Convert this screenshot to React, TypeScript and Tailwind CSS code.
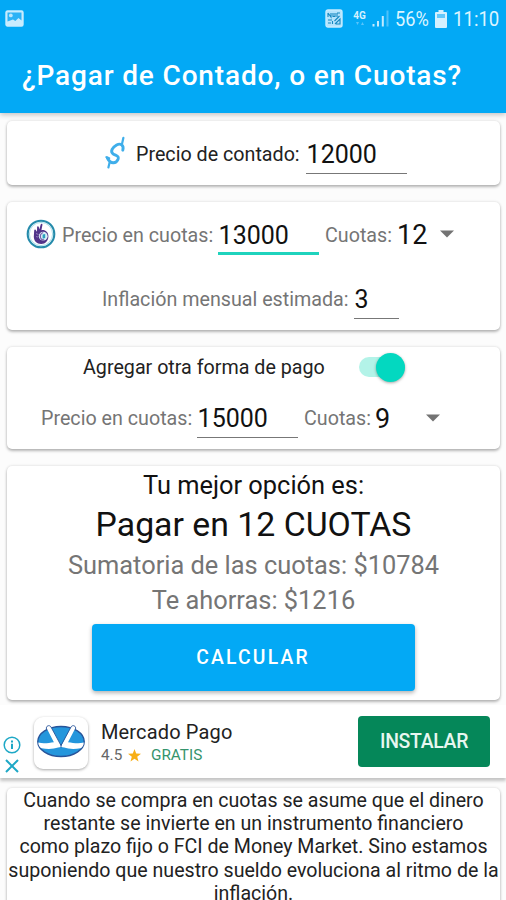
import type { ReactNode } from "react";
import clsx from "clsx";

type CardProps = {
  className?: string;
  children: ReactNode;
};

const Card = ({ className, children }: CardProps) => (
  <section
    className={clsx(
      "mr-[6px] ml-[7px] rounded-[5px] bg-white shadow-[0_2px_3px_rgba(0,0,0,0.26),0_0_3px_rgba(0,0,0,0.14)]",
      className
    )}
  >
    {children}
  </section>
);

type FieldProps = {
  value: string;
  className?: string;
  active?: boolean;
};

const Field = ({ value, className, active }: FieldProps) => (
  <div
    className={clsx(
      "h-[38px] shrink-0 pl-[0.6px] text-[25px] leading-[37px] text-[#111]",
      active ? "border-b-[3px] border-[#1fd3bd]" : "border-b border-[#777]",
      className
    )}
  >
    {value}
  </div>
);

const Caret = () => (
  <svg className="h-[8px] w-[14px] shrink-0" viewBox="0 0 14 8">
    <path d="M0 0.5h14L7 7.5z" fill="#737373" />
  </svg>
);

const PictureIcon = () => (
  <svg className="h-[17px] w-[19px]" viewBox="0 0 19 17">
    <rect x="1" y="1" width="17" height="15" rx="1.5" fill="#c9ecfe" stroke="#c9ecfe" strokeWidth="1.4" />
    <path d="M2.5 2.5h14v8l-3-2.5-3.2 3-2.3-1.5-5.5 2z" fill="#2bb2f6" />
    <circle cx="5.8" cy="5.4" r="1.9" fill="#b9e6fd" />
  </svg>
);

const NfcIcon = () => (
  <svg className="h-[19px] w-[18px]" viewBox="0 0 18 19">
    <rect x="1" y="1" width="16" height="17" rx="2" fill="#b5e4fd" stroke="#c7ebfe" strokeWidth="1.4" />
    <path
      d="M3 4v4M3 4l3 4V4M8 4v3.5h2V4M12 4h3M12 4v4M14.5 7l-5 5M3 11h4M3 14h3M7.5 12v3M10 15l5-5v5h-4"
      fill="none"
      stroke="#1789c2"
      strokeWidth="1.1"
    />
  </svg>
);

const NetworkIcon = () => (
  <div className="flex h-[18px] w-[15px] flex-col items-center text-[#d5f1ff]">
    <span className="text-[10px] leading-[11px] font-bold">4G</span>
    <svg className="h-[5px] w-[10px]" viewBox="0 0 10 5">
      <path d="M1 1h3L2.5 4zM6 4h3L7.5 1z" fill="#58c4fb" />
    </svg>
  </div>
);

const SignalIcon = () => (
  <svg className="h-[17px] w-[17px]" viewBox="0 0 17 17">
    <path d="M0.5 14h2v2.5h-2zM5 11h2v5.5H5zM9.8 6h2v10.5h-2z" fill="#c3eaff" />
    <path d="M14.5 0.5h2v16h-2z" fill="#4fc1fa" />
  </svg>
);

const BatteryIcon = () => (
  <svg className="h-[18px] w-[12px]" viewBox="0 0 12 18">
    <path d="M3.5 0h5v2H11a1 1 0 0 1 1 1v14a1 1 0 0 1-1 1H1a1 1 0 0 1-1-1V3a1 1 0 0 1 1-1h2.5z" fill="#d3f1ff" />
    <path d="M2 4h8v4H2z" fill="#62c8fb" />
  </svg>
);

const DollarIcon = () => (
  <svg className="h-[34px] w-[22px] shrink-0" viewBox="0 0 22 34" fill="none" stroke="#3faeea" strokeLinecap="round">
    <path
      d="M18.8 14.2C20.2 9.2 16.5 6.8 12.6 9C8.4 11.4 6 15.4 9 17.8C11.6 19.8 15.6 19.4 14 23.4C12 27.8 6.5 28.4 3.4 22"
      strokeWidth="2.9"
    />
    <path d="M18 8L19.4 1.8M5.6 26.4L4.4 31.5M2.4 21.2l2.8 1" strokeWidth="2.2" />
  </svg>
);

const HandCoinIcon = () => (
  <svg className="h-[30px] w-[30px] shrink-0" viewBox="0 0 30 30">
    <circle cx="15" cy="15" r="13.3" fill="#fff" stroke="#258bab" strokeWidth="2.1" />
    <circle cx="15" cy="15" r="11.6" fill="none" stroke="#a9deea" />
    <path
      d="M8.2 11.6c0-1.2 1.4-1.4 1.9-.2l.9 1.4.1-4.6c0-1.3 1.5-1.3 1.7-.1l.5 2.5 1.4-5.1c.4-1.3 2-.8 1.7.5l-1 5.2c3.5-.9 6.9 1.8 7 5.8.1 4.6-3 8-7.2 8-4.5 0-7.2-2.9-7.4-7.2z"
      fill="#513489"
    />
    <circle cx="17.2" cy="17.2" r="4.4" fill="#d9eff7" />
    <path d="M17.2 13.5c-2.3.8-3.2 3.2-2.6 5.4.8 1.6 2.2 2.2 3.6 1.8" fill="none" stroke="#7c62ad" strokeWidth="1.2" />
    <path d="M16.6 15.6l2.6-.6v4l-2.6.8z" fill="#2b9fbd" />
    <path d="M10 14.5l2.5 1M10 17.5l2 .6" stroke="#9d8ac5" strokeWidth=".8" />
  </svg>
);

const HandshakeLogo = () => (
  <svg className="-mt-[4px] h-[34px] w-[48px]" viewBox="0 0 48 34">
    <ellipse cx="24" cy="17.5" rx="23.2" ry="15" fill="#2496dc" stroke="#27549a" strokeWidth="1.4" />
    <path
      d="M1.3 18.5c5.3 1.6 10.7.3 15.6-.3L9.8 4.6C9 2 12.5.5 14 3l10.3 18.7L34 3c1.5-2.5 5-1 4.2 1.6L31 18.2c5 .6 10.4 1.9 15.7.3.2 2.7-1.3 5-3.2 5.7-5.6 1.3-11.9 1-16.4-.6-2.2-.8-3.8-.8-6 0-4.5 1.6-10.9 1.9-16.5.6-1.9-.7-3.4-3-3.3-5.7z"
      fill="#fff"
    />
    <path d="M9.5 5C8.5 2 12.5.3 14 3l10 18.5L34 3c1.5-2.7 5.5-1 4.5 2M24 20v3.5" fill="none" stroke="#27549a" strokeWidth=".9" />
  </svg>
);

const infoLines = [
  "Cuando se compra en cuotas se asume que el dinero",
  "restante se invierte en un instrumento financiero",
  "como plazo fijo o FCI de Money Market. Sino estamos",
  "suponiendo que nuestro sueldo evoluciona al ritmo de la",
  "inflación.",
];

const Header = () => (
  <header className="relative h-[113px] bg-[#03a9f5] shadow-[0_2px_5px_rgba(0,0,0,0.22)]">
    <div className="flex h-[37px] items-center justify-between pr-[6px] pl-[5px] text-[20px] text-[#dcf4ff]">
      <PictureIcon />
      <div className="flex items-center">
        <NfcIcon />
        <div className="ml-[9px]">
          <NetworkIcon />
        </div>
        <div className="ml-[5px]">
          <SignalIcon />
        </div>
        <span className="ml-[6px] w-[35px] origin-left scale-x-[0.91]">56%</span>
        <div className="ml-[5px]">
          <BatteryIcon />
        </div>
        <span className="ml-[6px] w-[47px] origin-left scale-x-[0.93] whitespace-nowrap">11:10</span>
      </div>
    </div>
    <h1 className="pt-[21px] pl-[22px] text-[28px] leading-[36px] font-medium tracking-[0.85px] whitespace-nowrap text-white">
      ¿Pagar de Contado, o en Cuotas?
    </h1>
  </header>
);

const App = () => {
  return (
    <main className="h-[900px] w-[506px] overflow-hidden bg-[#fcfcfc] font-['Roboto',sans-serif] text-[19.7px] text-[#757575]">
      <Header />

      <Card className="mt-[8px] flex h-[64px] items-center pl-[97px]">
        <DollarIcon />
        <span className="mt-[3px] ml-[10px] w-[170px] shrink-0 whitespace-nowrap text-[#222]">Precio de contado:</span>
        <Field value="12000" className="mt-[4px] w-[101px]" />
      </Card>

      <Card className="mt-[17px] h-[128px] pt-[8px]">
        <div className="flex h-[48px] items-center pl-[19px]">
          <HandCoinIcon />
          <span className="mt-[3px] ml-[6px] w-[156px] shrink-0 whitespace-nowrap">Precio en cuotas:</span>
          <Field value="13000" active className="mt-[4px] w-[101px]" />
          <span className="mt-[3px] ml-[6px] w-[72px] shrink-0 whitespace-nowrap">Cuotas:</span>
          <span className="mt-[3px] w-[43px] text-[27px] text-[#111]">12</span>
          <Caret />
        </div>
        <div className="mt-[17px] flex h-[48px] items-center pl-[95px]">
          <span className="mt-[2px] w-[252px] shrink-0 whitespace-nowrap">Inflación mensual estimada:</span>
          <Field value="3" className="mt-[2px] w-[45px]" />
        </div>
      </Card>

      <Card className="mt-[17px] h-[102px] pt-[4px]">
        <div className="flex h-[32px] items-center pl-[76px]">
          <span className="mt-[2px] w-[276px] shrink-0 whitespace-nowrap text-[#222]">Agregar otra forma de pago</span>
          <div className="flex h-[20px] w-[46px] items-center justify-end rounded-full bg-[#b3f3e8]">
            <div className="h-[29px] w-[29px] shrink-0 rounded-full bg-[#03d8c0] shadow-[0_1px_3px_rgba(0,0,0,0.35)]" />
          </div>
        </div>
        <div className="mt-[11px] flex h-[48px] items-center pl-[34px]">
          <span className="mt-[2px] w-[156px] shrink-0 whitespace-nowrap">Precio en cuotas:</span>
          <Field value="15000" className="mt-[2px] w-[101px]" />
          <span className="mt-[2px] ml-[6px] w-[71px] shrink-0 whitespace-nowrap">Cuotas:</span>
          <span className="mt-[2px] w-[51px] text-[27px] text-[#111]">9</span>
          <Caret />
        </div>
      </Card>

      <Card className="mt-[17px] flex h-[234px] flex-col items-center text-[25.4px]">
        <p className="pt-[2px] leading-[34px] text-[#111]">Tu mejor opción es:</p>
        <p className="text-[33.8px] leading-[46px] text-[#111]">Pagar en 12 CUOTAS</p>
        <p className="leading-[35px]">Sumatoria de las cuotas: $10784</p>
        <p className="leading-[34px]">Te ahorras: $1216</p>
        <button className="mt-[7px] mr-px h-[67px] w-[323px] rounded-[4px] bg-[#03a9f5] pt-[2px] text-[19.3px] font-medium tracking-[2.2px] text-white shadow-[0_2px_4px_rgba(0,0,0,0.3)]">
          CALCULAR
        </button>
      </Card>

      <aside className="mt-[5px] flex h-[73px] bg-white shadow-[0_3px_3px_rgba(0,0,0,0.22)]">
        <div className="ml-[3px] flex w-[18px] flex-col items-center gap-[5px] pt-[31px]">
          <svg className="h-[18px] w-[18px] shrink-0" viewBox="0 0 18 18" fill="none" stroke="#1ea8c6">
            <circle cx="9" cy="9" r="7.8" strokeWidth="1.5" />
            <path d="M9 7.7v5.4M9 4.4v2" strokeWidth="2" />
          </svg>
          <svg className="h-[14px] w-[14px] shrink-0" viewBox="0 0 14 14" stroke="#1ea8c6" strokeWidth="2">
            <path d="M1 1l12 12M13 1L1 13" />
          </svg>
        </div>
        <div className="mt-[12px] ml-[13px] flex h-[52px] w-[54px] items-center justify-center rounded-[9px] bg-white shadow-[0_1px_3px_rgba(0,0,0,0.35)]">
          <HandshakeLogo />
        </div>
        <div className="ml-[13px] w-[257px] pt-[13px]">
          <p className="text-[20px] leading-[28px] tracking-[0.15px] text-[#222]">Mercado Pago</p>
          <div className="flex h-[18px] items-center text-[15.3px]">
            <span className="w-[27px] text-[#666]">4.5</span>
            <svg className="h-[13px] w-[13px]" viewBox="0 0 13 13">
              <path d="M6.5 0l1.7 4.5 4.8.2-3.8 3 1.3 4.7-4-2.7-4 2.7 1.3-4.7L0 4.7l4.8-.2z" fill="#f8af16" />
            </svg>
            <span className="ml-[10px] text-[#35946d]">GRATIS</span>
          </div>
        </div>
        <button className="mt-[11px] h-[51px] w-[132px] rounded-[4px] bg-[#058759] pt-px text-[19.4px] font-medium tracking-[-0.3px] text-[#e8f7f0]">
          INSTALAR
        </button>
      </aside>

      <Card className="mt-[10px] h-[150px] pt-[1px] text-center text-[19.6px] leading-[23.2px] text-[#222]">
        {infoLines.map((line) => (
          <p key={line} className="whitespace-nowrap">
            {line}
          </p>
        ))}
      </Card>
    </main>
  );
};

export default App;
